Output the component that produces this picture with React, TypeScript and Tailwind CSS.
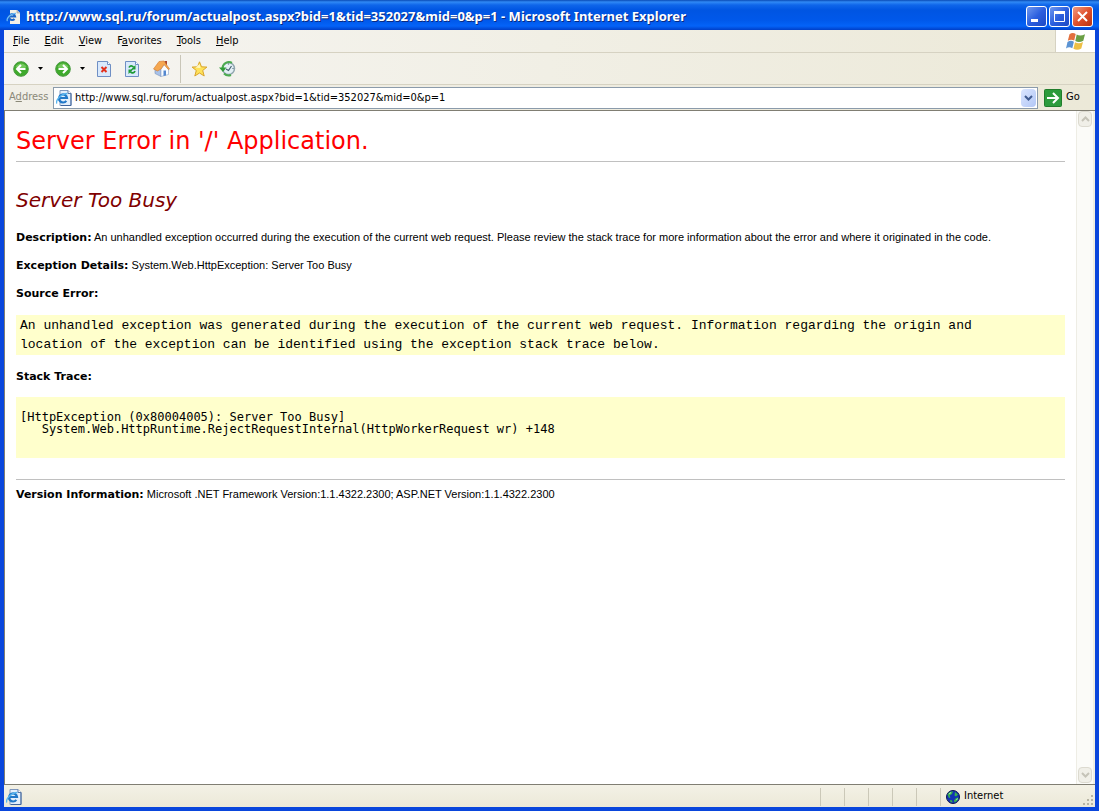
import React, { useState } from 'react';

const PAGE_URL = 'http://www.sql.ru/forum/actualpost.aspx?bid=1&tid=352027&mid=0&p=1';

const menuItems = [
    { before: '', key: 'F', after: 'ile' },
    { before: '', key: 'E', after: 'dit' },
    { before: '', key: 'V', after: 'iew' },
    { before: 'F', key: 'a', after: 'vorites' },
    { before: '', key: 'T', after: 'ools' },
    { before: '', key: 'H', after: 'elp' },
];

const PageIcon = () => (
    <svg width="16" height="16" viewBox="0 0 16 16">
        <path d="M4 .5h8l3 3v12H4z" fill="#e4effb" stroke="#7f97bd" />
        <path d="M15 3.500v12H5" fill="none" stroke="#3f649c" />
        <path d="M12 .5v3h3" fill="#fff" stroke="#5875a4" />
        <path d="M10.300 10.800a4 4 0 1 1 .7-2.800H3.500" fill="none" stroke="#2178c8" strokeWidth="2.200" />
        <path d="M1 13.500C-1 11 5 3.500 11.500 3.500" fill="none" stroke="#58b5ee" strokeWidth="1.300" />
    </svg>
);

const ArrowCircle = ({ back = false }: { back?: boolean }) => (
    <svg width="16" height="16" viewBox="0 0 16 16">
        <circle cx="8" cy="8" r="7.300" fill="#3faa2c" stroke="#4a9a40" />
        <path d="M2.500 6a6 6 0 0 1 11 0c-3 2-8 2-11 0z" fill="#8bd472" opacity=".7" />
        <path
            d={back ? 'M12.500 8H4.500M8 4 4 8l4 4' : 'M3.500 8h8M8 4l4 4-4 4'}
            fill="none"
            stroke="#fff"
            strokeWidth="2"
        />
    </svg>
);

const Caret = () => (
    <svg width="5" height="3" viewBox="0 0 5 3">
        <path d="M0 0h5L2.500 3z" fill="#000" />
    </svg>
);

const StopIcon = () => (
    <svg width="14" height="16" viewBox="0 0 14 16">
        <path d="M.5.5h10l3 3v12H.5z" fill="#d9e9fc" stroke="#6f8fc4" />
        <path d="M10.500.5v3h3" fill="#fff" stroke="#6f8fc4" />
        <path d="m4.500 6 5 5m0-5-5 5" stroke="#e3301c" strokeWidth="2" />
    </svg>
);

const RefreshIcon = () => (
    <svg width="14" height="16" viewBox="0 0 14 16">
        <path d="M.5.5h10l3 3v12H.5z" fill="#d9e9fc" stroke="#6f8fc4" />
        <path d="M10.500.5v3h3" fill="#fff" stroke="#6f8fc4" />
        <path d="M4 6.500C5 4.300 7 4.300 8.500 6M10 10c-1 2.200-3 2.500-4.500.8" fill="none" stroke="#1c9a35" strokeWidth="1.800" />
        <path d="M10.500 4v4.500H6zM3.500 13V8.500H8z" fill="#1c9a35" />
    </svg>
);

const HomeIcon = () => (
    <svg width="17" height="17" viewBox="0 0 17 17">
        <path d="M11.500 1H14v5l-2.500-2z" fill="#a9442f" />
        <path d="M2 9v4.500L8 16.500V8L5 5z" fill="#a9c2e8" stroke="#7892ba" strokeWidth=".6" />
        <path d="m8 9 3.500-4.500L15.500 9v5.500l-7.500 2z" fill="#fafdff" stroke="#8ba2c6" strokeWidth=".6" />
        <path d="M.5 9 6 1.500 11 1l5.500 8-1 .7L11 4.500 8 9 4.500 11z" fill="#f5a750" stroke="#d07a30" strokeWidth=".6" />
        <path d="M10.500 10.500H13v5l-2.500.6z" fill="#5488cf" />
    </svg>
);

const StarIcon = () => (
    <svg width="17" height="16" viewBox="0 0 16 16">
        <path d="m8 .8 2 5 5.400.3-4.200 3.400 1.500 5.500L8 12l-4.700 3 1.500-5.500L.6 6.100 6 5.800z" fill="#ffe25a" stroke="#d9a42a" />
        <path d="m8 3 1 4-5-.3" fill="#fff8bd" />
    </svg>
);

const HistoryIcon = () => (
    <svg width="17" height="16" viewBox="0 0 17 16">
        <circle cx="9.500" cy="7.500" r="6" fill="#e4f0f5" stroke="#8fa5ae" strokeWidth="1.500" />
        <path d="m7 8 2.500 1.500L12.500 5M9.500 2.500v1M13.500 7.500h1" fill="none" stroke="#466070" strokeWidth="1.200" />
        <path d="M13 1.800A6.500 6.500 0 0 0 3.500 7M5 12.500a6.500 6.500 0 0 0 7 1.500" fill="none" stroke="#4dab50" strokeWidth="2" />
        <path d="M0 6.500h7.500L4 11z" fill="#319c39" />
    </svg>
);

const WindowsFlag = () => (
    <svg width="20" height="19" viewBox="0 0 20 19">
        <path d="M3.500 2.200c2.300-1.600 4.400-1.300 6.200-.2L8.200 8.600C6.200 7.500 4 7.400 1.800 8.800z" fill="#e2703f" />
        <path d="M10.700 2.500c2.500 1.400 5 1.300 8.300-.3l-1.700 6.500c-2.800 1.500-5.300 1.700-8 .3z" fill="#6a9f45" />
        <path d="M1.500 9.900c2.300-1.400 4.400-1.300 6.400-.2l-1.600 6.500C4.300 15 2.200 15 0 16.400z" fill="#5b93d3" />
        <path d="M9 10.200c2.600 1.400 5.300 1.300 8-.2l-1.700 6.500c-3 1.600-5.300 1.500-7.900.2z" fill="#edbf45" />
    </svg>
);

const GlobeIcon = () => (
    <svg width="14" height="14" viewBox="0 0 14 14">
        <circle cx="7" cy="7" r="6.500" fill="#1233b4" stroke="#0a1650" />
        <path d="M1.500 4.500C3 2 5 1 7 1.500L6 4 3.500 5.500l1 2-1.500.5zM9 2l3 2.500-2 2-1.500-1zM12.500 7.500 11 11l-2.500 1.500-.5-2L10 8zM4 10l2 .5.500 2-2-.5z" fill="#39b54a" />
        <path d="m3 4 2-1.500M10.500 10l1-1.500" stroke="#a2edc4" />
    </svg>
);

const ScrollButton = ({ up = false }: { up?: boolean }) => (
    <button
        aria-label={up ? 'Scroll up' : 'Scroll down'}
        className="flex h-4 w-full items-center justify-center rounded-sm border border-[#dcdad0] bg-[#f0efe8]"
    >
        <svg width="9" height="6" viewBox="0 0 9 6">
            <path d={up ? 'm1 5 3.500-3.500L8 5' : 'm1 1 3.500 3.500L8 1'} fill="none" stroke="#c5c3b8" strokeWidth="2" />
        </svg>
    </button>
);

const Label = ({ children }: { children: React.ReactNode }) => (
    <b className="font-['DejaVu_Sans',Verdana,sans-serif] leading-none">{children}</b>
);

const TitleBar = () => (
    <header className="flex h-[30px] shrink-0 items-center justify-between bg-[linear-gradient(#0a4bb5_0px,#3089f5_2px,#0f66ea_5px,#0055e2_10px,#0058ea_20px,#0463f8_26px,#003fc8_30px)] pt-[3px] pr-[6px] pl-[6px]">
        <div className="flex items-center gap-1">
            <svg width="16" height="16" viewBox="0 0 16 16">
                <path d="M4 1h7l3 3v11H4z" fill="#f2f0e8" />
                <path d="M11 1v3h3" fill="#c9c9c4" stroke="#9c9c98" strokeWidth=".6" />
                <path d="M8.500 10a3 3 0 1 1 .6-2.500H3.500" fill="none" stroke="#1c66c8" strokeWidth="2" />
                <path d="M1.500 12C-.5 10 5 4 10 4.500" fill="none" stroke="#6cbcf5" strokeWidth="1.300" />
            </svg>
            <h1 className="font-['Noto_Sans','Open_Sans',sans-serif] text-[13px] font-bold whitespace-nowrap text-white [text-shadow:1px_1px_#0a2a80]">
                {PAGE_URL} - Microsoft Internet Explorer
            </h1>
        </div>
        <div className="flex gap-[2px]">
            <button aria-label="Minimize" className="h-[21px] w-[21px] rounded-[3px] border border-white bg-linear-to-br from-[#7097ee] via-[#2c5fdf] to-[#1d49c4]">
                <svg width="19" height="19" viewBox="0 0 19 19">
                    <path d="M4 12h7v3H4z" fill="#fff" />
                </svg>
            </button>
            <button aria-label="Maximize" className="h-[21px] w-[21px] rounded-[3px] border border-white bg-linear-to-br from-[#7097ee] via-[#2c5fdf] to-[#1d49c4]">
                <svg width="19" height="19" viewBox="0 0 19 19">
                    <path d="M4.500 5v9.500h10V5" fill="none" stroke="#fff" />
                    <path d="M4 4h11v3H4z" fill="#fff" />
                </svg>
            </button>
            <button aria-label="Close" className="h-[21px] w-[21px] rounded-[3px] border border-white bg-linear-to-br from-[#ee9a80] via-[#e0502c] to-[#b83310]">
                <svg width="19" height="19" viewBox="0 0 19 19">
                    <path d="m5 5 9 9m0-9-9 9" stroke="#fff" strokeWidth="2" />
                </svg>
            </button>
        </div>
    </header>
);

const Toolbar = () => (
    <div className="flex h-8 shrink-0 items-center border-b border-[#d6d2c2] bg-linear-to-r from-[#f6f5f2] to-[#ece9d8] pl-[9px]">
        <button aria-label="Back"><ArrowCircle back /></button>
        <button aria-label="Back history" className="flex h-4 w-[26px] items-center justify-center pr-[4px]"><Caret /></button>
        <button aria-label="Forward"><ArrowCircle /></button>
        <button aria-label="Forward history" className="flex h-4 w-[26px] items-center justify-center pr-[4px]"><Caret /></button>
        <div className="flex items-center gap-[14px]">
            <button aria-label="Stop"><StopIcon /></button>
            <button aria-label="Refresh"><RefreshIcon /></button>
            <button aria-label="Home"><HomeIcon /></button>
        </div>
        <div className="mx-[10px] h-7 border-l border-[#c9c6b8]" />
        <div className="flex items-center gap-[11px]">
            <button aria-label="Favorites"><StarIcon /></button>
            <button aria-label="History"><HistoryIcon /></button>
        </div>
    </div>
);

const AddressBar = () => {
    const [address, setAddress] = useState(PAGE_URL);

    return (
        <div className="flex h-[25px] shrink-0 items-center bg-linear-to-r from-[#f1efe8] to-[#ece9d8] pl-[5px]">
            <label htmlFor="address" className="w-11 text-[#8a8878]">
                A<u>d</u>dress
            </label>
            <div className="flex h-[22px] min-w-0 flex-1 items-center border border-[#8b9bab] bg-white pr-px pl-[2px]">
                <PageIcon />
                <input
                    id="address"
                    type="text"
                    value={address}
                    onChange={(e) => setAddress(e.target.value)}
                    className="ml-[3px] min-w-0 flex-1 pt-px outline-none"
                />
                <button aria-label="Show addresses" className="flex h-[18px] w-[15px] items-center justify-center rounded-sm bg-linear-to-br from-[#dbe6ff] to-[#b2c7f6]">
                    <svg width="9" height="6" viewBox="0 0 9 6">
                        <path d="m1 1 3.500 3.500L8 1" fill="none" stroke="#405b90" strokeWidth="2" />
                    </svg>
                </button>
            </div>
            <button className="flex w-[57px] items-center gap-1 pl-[6px]">
                <svg width="18" height="18" viewBox="0 0 18 18">
                    <rect x=".5" y=".5" width="17" height="17" rx="1" fill="#2c9b3c" stroke="#217d2c" />
                    <path d="M3 9h10M9 4l5 5-5 5" fill="none" stroke="#fff" strokeWidth="2" />
                </svg>
                Go
            </button>
        </div>
    );
};

const ErrorPage = () => (
    <main className="min-w-0 flex-1 overflow-hidden px-[11px] pt-[14px] font-['Liberation_Sans',Arial,sans-serif] text-[11px] leading-4">
        <h1 className="border-b border-[#c0c0c0] pb-1 font-['DejaVu_Sans',Verdana,sans-serif] text-2xl text-[#f00]">
            Server Error in '/' Application.
        </h1>
        <h2 className="mt-[26px] mb-[17px] font-['DejaVu_Sans',Verdana,sans-serif] text-xl leading-6 text-[#800000] italic">
            Server Too Busy
        </h2>
        <p className="mb-3">
            <Label>Description:</Label> An unhandled exception occurred during the execution of the current web request. Please review the stack trace for more information about the error and where it originated in the code.
        </p>
        <p className="mb-3">
            <Label>Exception Details:</Label> System.Web.HttpException: Server Too Busy
        </p>
        <p className="mb-[14px]"><Label>Source Error:</Label></p>
        <p className="mb-[13px] bg-[#ffffcc] py-px pr-8 pl-1 font-['Liberation_Mono','Courier_New',monospace] text-[13px] leading-[19px]">
            An unhandled exception was generated during the execution of the current web request. Information regarding the origin and location of the exception can be identified using the exception stack trace below.
        </p>
        <p className="mb-[13px]"><Label>Stack Trace:</Label></p>
        <pre className="mb-[21px] bg-[#ffffcc] px-1 pt-[14px] pb-[23px] font-['DejaVu_Sans_Mono','Lucida_Console',monospace] text-[12px] leading-3">
            {'[HttpException (0x80004005): Server Too Busy]\n   System.Web.HttpRuntime.RejectRequestInternal(HttpWorkerRequest wr) +148'}
        </pre>
        <hr className="mb-[6px] border-[#c0c0c0]" />
        <p>
            <Label>Version Information:</Label> Microsoft .NET Framework Version:1.1.4322.2300; ASP.NET Version:1.1.4322.2300
        </p>
    </main>
);

const StatusBar = () => (
    <footer className="flex h-[22px] shrink-0 items-center justify-between bg-linear-to-b from-[#f3f1e6] to-[#ece9d8] pt-px pl-[2px]">
        <PageIcon />
        <div className="flex h-full items-center">
            {[0, 1, 2, 3, 4].map((pane) => (
                <div key={pane} className="h-[18px] w-6 border-l border-[#cbc8b8]" />
            ))}
            <div className="flex h-[18px] w-[142px] items-center gap-1 border-l border-[#cbc8b8] pl-[5px]">
                <GlobeIcon />
                Internet
            </div>
            <svg width="13" height="13" viewBox="0 0 13 13" className="self-end">
                <path d="M9 1h2v2H9zM5 5h2v2H5zM9 5h2v2H9zM1 9h2v2H1zM5 9h2v2H5zM9 9h2v2H9z" fill="#b8b5a4" />
            </svg>
        </div>
    </footer>
);

const App: React.FC = () => {
    return (
        <div className="flex h-screen flex-col bg-[#0a3fd6] font-['DejaVu_Sans_Condensed','DejaVu_Sans',Tahoma,sans-serif] text-[11px] text-black">
            <TitleBar />
            <div className="flex min-h-0 flex-1 flex-col border-x-4 border-b-4 border-[#0a46dc] bg-[#ece9d8]">
                {/* Menu */}
                <div className="flex h-[23px] shrink-0 border-b border-[#d6d2c2] bg-linear-to-r from-[#f6f5f2] to-[#ece9d8]">
                    <nav className="flex flex-1 items-center gap-[15px] pl-[9px]">
                        {menuItems.map((item) => (
                            <button key={item.key}>
                                {item.before}<u>{item.key}</u>{item.after}
                            </button>
                        ))}
                    </nav>
                    <div className="flex w-10 items-center justify-center border-l border-[#d6d2c2] bg-white">
                        <WindowsFlag />
                    </div>
                </div>
                <Toolbar />
                <AddressBar />

                {/* Content */}
                <div className="flex min-h-0 flex-1 border-t border-b border-l border-[#807e73] bg-white">
                    <ErrorPage />
                    <div className="flex w-[17px] shrink-0 flex-col justify-between border-l border-[#eeede5] bg-[#fbfbf8] px-px pb-px">
                        <ScrollButton up />
                        <ScrollButton />
                    </div>
                    <div className="w-[2px] bg-[#f1efe2]" />
                </div>
                <StatusBar />
            </div>
        </div>
    );
};

export default App;
